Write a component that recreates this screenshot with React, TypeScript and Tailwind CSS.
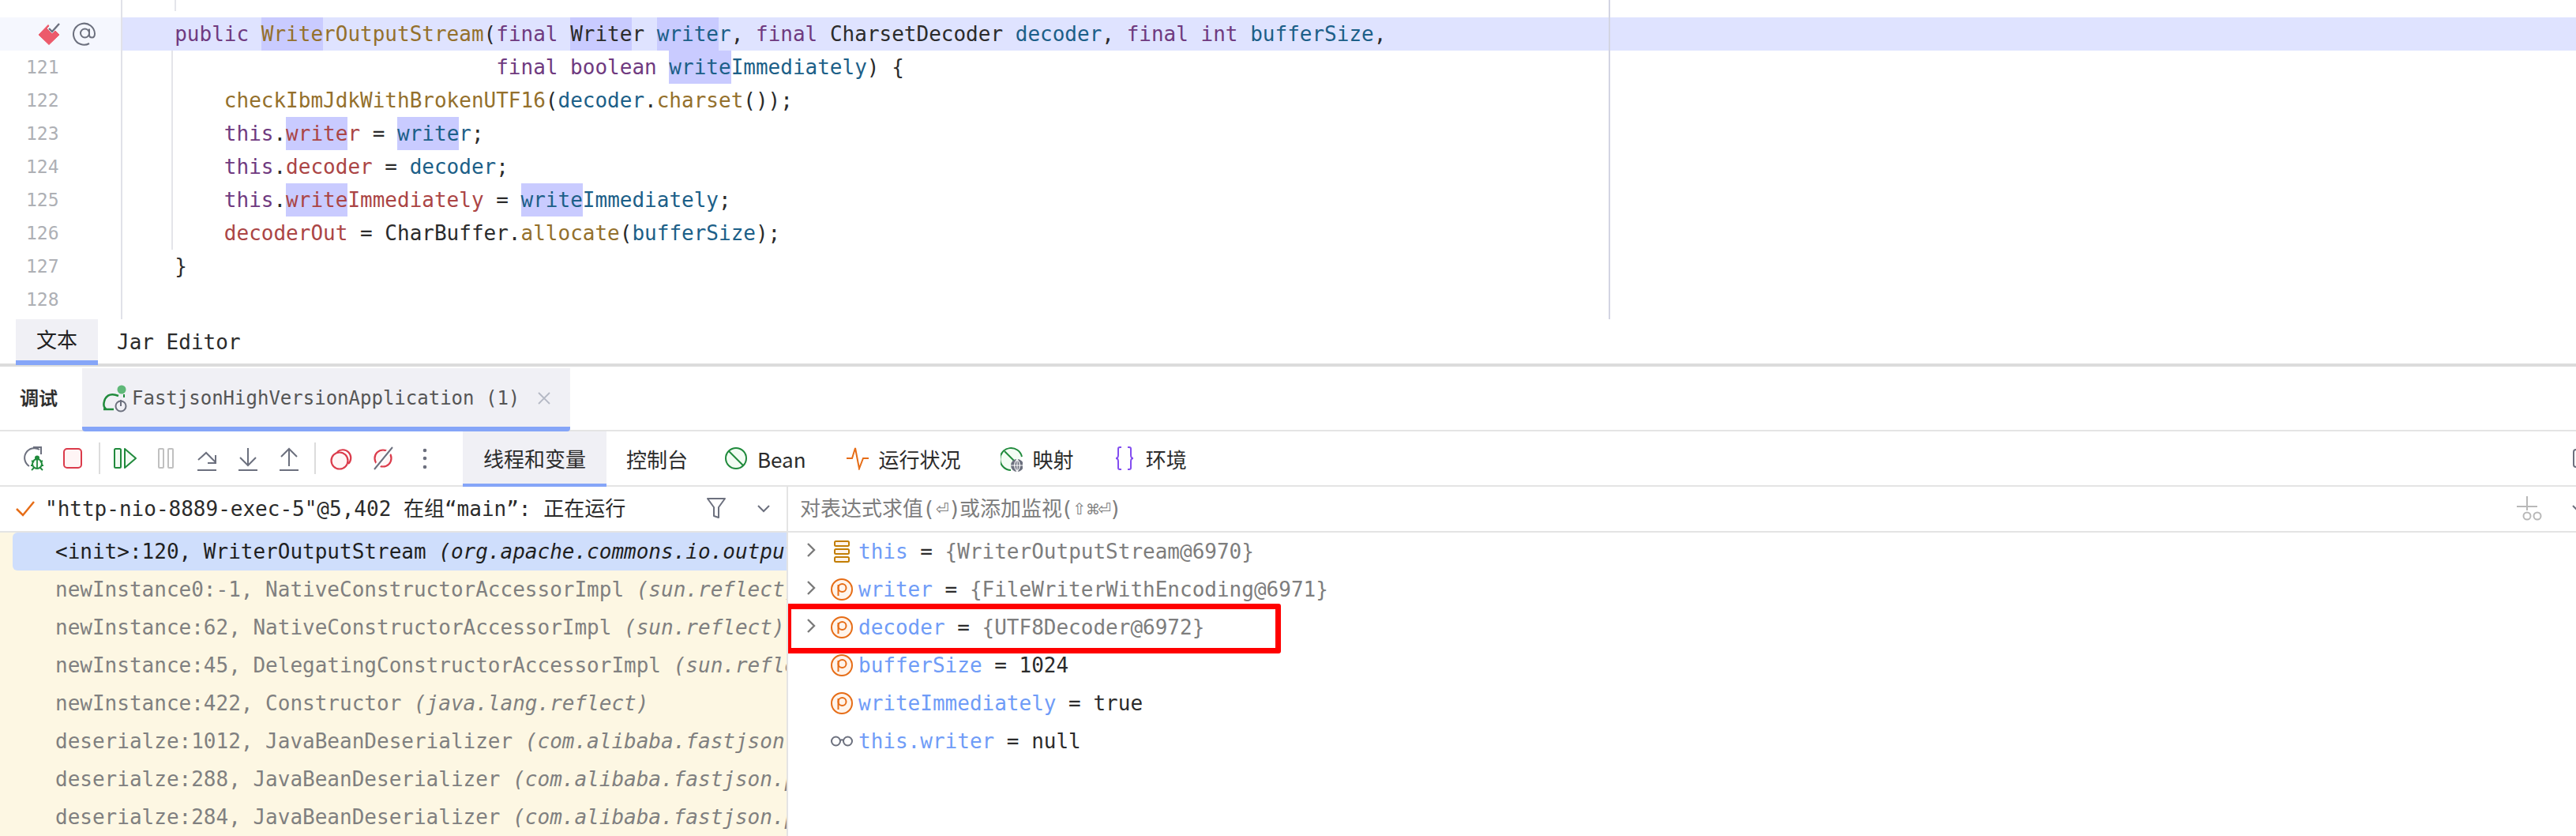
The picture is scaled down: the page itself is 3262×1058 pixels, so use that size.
import React from "react";

const MONO = "font-['DejaVu_Sans_Mono','Noto_Sans_CJK_SC',monospace]";
const KW = "text-[#6f3a80]";
const MT = "text-[#94702c]";
const PR = "text-[#1c5f88]";
const FD = "text-[#ab4545]";
const TX = "text-[#2b2b2b]";
const HL = "inline-block bg-[#c9cbff]";

const Hi = ({ children, c }: { children: string; c: string }) => <span className={`${HL} ${c}`}>{children}</span>;
const S = ({ children, c }: { children: string; c: string }) => <span className={c}>{children}</span>;

const codeLines: React.ReactNode[] = [
  <>
    {"    "}<S c={KW}>public </S><Hi c={MT}>Write</Hi><S c={MT}>rOutputStream</S><S c={TX}>(</S><S c={KW}>final </S>
    <Hi c={TX}>Write</Hi><S c={TX}>r </S><Hi c={PR}>write</Hi><S c={PR}>r</S><S c={TX}>, </S><S c={KW}>final </S><S c={TX}>CharsetDecoder </S>
    <S c={PR}>decoder</S><S c={TX}>, </S><S c={KW}>final int </S><S c={PR}>bufferSize</S><S c={TX}>,</S>
  </>,
  <>
    {"                              "}<S c={KW}>final boolean </S><Hi c={PR}>write</Hi><S c={PR}>Immediately</S><S c={TX}>{") {"}</S>
  </>,
  <>
    {"        "}<S c={MT}>checkIbmJdkWithBrokenUTF16</S><S c={TX}>(</S><S c={PR}>decoder</S><S c={TX}>.</S><S c={MT}>charset</S><S c={TX}>());</S>
  </>,
  <>
    {"        "}<S c={KW}>this</S><S c={TX}>.</S><Hi c={FD}>write</Hi><S c={FD}>r</S><S c={TX}>{" = "}</S><Hi c={PR}>write</Hi><S c={PR}>r</S><S c={TX}>;</S>
  </>,
  <>
    {"        "}<S c={KW}>this</S><S c={TX}>.</S><S c={FD}>decoder</S><S c={TX}>{" = "}</S><S c={PR}>decoder</S><S c={TX}>;</S>
  </>,
  <>
    {"        "}<S c={KW}>this</S><S c={TX}>.</S><Hi c={FD}>write</Hi><S c={FD}>Immediately</S><S c={TX}>{" = "}</S><Hi c={PR}>write</Hi><S c={PR}>Immediately</S><S c={TX}>;</S>
  </>,
  <>
    {"        "}<S c={FD}>decoderOut</S><S c={TX}>{" = CharBuffer."}</S><S c={MT}>allocate</S><S c={TX}>(</S><S c={PR}>bufferSize</S><S c={TX}>);</S>
  </>,
  <>
    {"    "}<S c={TX}>{"}"}</S>
  </>,
  <></>,
];

const lineNos = ["", "121", "122", "123", "124", "125", "126", "127", "128"];

const frames: [string, string][] = [
  ["newInstance0:-1, NativeConstructorAccessorImpl ", "(sun.reflect)"],
  ["newInstance:62, NativeConstructorAccessorImpl ", "(sun.reflect)"],
  ["newInstance:45, DelegatingConstructorAccessorImpl ", "(sun.reflect)"],
  ["newInstance:422, Constructor ", "(java.lang.reflect)"],
  ["deserialze:1012, JavaBeanDeserializer ", "(com.alibaba.fastjson.parser)"],
  ["deserialze:288, JavaBeanDeserializer ", "(com.alibaba.fastjson.parser)"],
  ["deserialze:284, JavaBeanDeserializer ", "(com.alibaba.fastjson.parser)"],
];

const GR = "#6c707e";
const GREEN = "#208a3c";
const RED = "#db3b4b";
const ORANGE = "#e66d17";

const Chevron = () => (
  <svg width="12" height="20" viewBox="0 0 12 20" fill="none" stroke="#7a7a7a" strokeWidth="2.4"><path d="M2 2l8 8-8 8" /></svg>
);
const PIcon = () => (
  <svg width="28" height="28" viewBox="0 0 28 28" fill="none" className="shrink-0">
    <circle cx="14" cy="14" r="13" fill="#fff4eb" stroke={ORANGE} strokeWidth="2" />
    <circle cx="14.5" cy="12" r="5" stroke={ORANGE} strokeWidth="2" />
    <path d="M9.500 8v14" stroke={ORANGE} strokeWidth="2" />
  </svg>
);
const StackIcon = () => (
  <svg width="20" height="28" viewBox="0 0 20 28" fill="none" stroke="#c27d04" strokeWidth="2" className="shrink-0">
    <rect x="1" y="1" width="18" height="6" rx="1.5" fill="#fff4eb" />
    <rect x="1" y="11" width="18" height="6" rx="1.5" fill="#fff4eb" />
    <rect x="1" y="21" width="18" height="6" rx="1.5" fill="#fff4eb" />
  </svg>
);
const Glasses = ({ c = GR, w = 30 }: { c?: string; w?: number }) => (
  <svg width={w} height="14" viewBox="0 0 30 14" fill="none" stroke={c} strokeWidth="2" className="shrink-0">
    <circle cx="7.5" cy="7" r="5.5" /><circle cx="22.5" cy="7" r="5.5" /><path d="M13 6q2-1.500 4 0" />
  </svg>
);

const Tool = ({ w, h = 34, vb, children, className = "" }: { w: number; h?: number; vb?: string; children: React.ReactNode; className?: string }) => (
  <svg width={w} height={h} viewBox={vb ?? `0 0 ${w} ${h}`} fill="none" className={`shrink-0 ${className}`}>{children}</svg>
);

const Tab = ({ label, icon, active, className = "" }: { label: string; icon?: React.ReactNode; active?: boolean; className?: string }) => (
  <div className={`flex h-[70px] items-center gap-[13px] pb-[2px] ${active ? "bg-[#f0f0f5] border-b-4 border-[#85a5f8] pt-[2px]" : ""} ${className}`}>
    {icon}
    <span className="text-[26px] text-[#2b2b2b]">{label}</span>
  </div>
);

const Var = ({ chevron, icon, name, val, dark }: { chevron?: boolean; icon: React.ReactNode; name: string; val: string; dark?: boolean }) => (
  <div className="flex h-[48px] items-center whitespace-pre">
    <div className="flex w-[54px] shrink-0 pl-[23px] pb-[4px]">{chevron && <Chevron />}</div>
    <div className="flex w-[28px] shrink-0 justify-center">{icon}</div>
    <div className="pl-[7px]">
      <span className="text-[#6f9cf7]">{name}</span>
      <span className="text-[#2b2b2b]"> = </span>
      <span className={dark ? "text-[#2b2b2b]" : "text-[#7d7d7d]"}>{val}</span>
    </div>
  </div>
);

const Sym = ({ children, className }: { children: string; className: string }) => (
  <span className={`inline-block text-center font-['DejaVu_Sans',sans-serif] ${className}`}>{children}</span>
);

export default function App() {
  return (
    <div className={`flex h-[1058px] w-[3262px] flex-col overflow-hidden bg-white text-[26px] ${MONO}`}>
      {/* editor */}
      <div className="flex h-[404px] shrink-0">
        <div className="w-[155px] shrink-0 border-r-2 border-[#e1e2e9] pt-[22px]">
          {lineNos.map((n, i) => (
            <div key={i} className={`relative flex h-[42px] items-center justify-start pl-[33px] text-[23px] text-[#aeb0b5] ${i === 0 ? "bg-[#f5f7fe]" : ""}`}>
              {i === 0 ? (
                <div className="flex items-center gap-[16px] pl-[15px]">
                  <svg width="28" height="28" viewBox="0 0 28 28" fill="none">
                    <path d="M13 2.500 L1 15 L14 27.500 L27 15 L22 10 L18 14 L11 7 L14 4Z" fill="#ec5a6b" stroke="#ec5a6b" strokeLinejoin="round" />
                    <path d="M14 7l4 4 9-10" stroke={GR} strokeWidth="2.4" />
                  </svg>
                  <svg width="30" height="30" viewBox="0 0 30 30" fill="none" stroke={GR} strokeWidth="2">
                    <circle cx="15.500" cy="14" r="5.500" />
                    <path d="M21 8.500V16q0 3.500 3.500 3.500T28 14.500A13.500 13.500 0 1 0 21 27" />
                  </svg>
                </div>
              ) : n}
            </div>
          ))}
        </div>
        <div className="relative flex-1 pt-[22px]">
          <div className="absolute left-[66px] top-0 h-[14px] w-[2px] bg-[#e4e5ea]" />
          <div className="absolute left-[62px] top-[64px] h-[252px] w-[2px] bg-[#e4e5ea]" />
          {codeLines.map((l, i) => (
            <div key={i} className={`h-[42px] whitespace-pre pl-[3.6px] leading-[42px] ${i === 0 ? "bg-[#dfe3ff]" : ""}`}>{l}</div>
          ))}
          <div className="absolute left-[1882px] top-0 h-full w-[2px] bg-[#d3d5e3]" />
        </div>
      </div>

      {/* editor tabs */}
      <div className="relative flex h-[60px] shrink-0 border-b-4 border-[#dcdcdc] pl-[20px]">
        <div className="relative z-10 flex h-[58px] w-[104px] items-center justify-center border-b-[6px] border-[#85a5f8] bg-[#f0f0f5] pt-[2px] text-[#222]">文本</div>
        <div className="flex h-[56px] items-center pl-[24px] pt-[2px] text-[#2b2b2b]">Jar Editor</div>
      </div>

      {/* debug header */}
      <div className="flex h-[82px] shrink-0 border-b-2 border-[#e4e4e4] pl-[25px] text-[24px]">
        <div className="flex w-[79px] items-center pt-[2px] text-[#2b2b2b] [font-weight:500] [-webkit-text-stroke:0.3px_#2b2b2b]">调试</div>
        <div className="relative mt-[2px] flex h-[80px] w-[618px] items-center rounded-b-[4px] border-b-[6px] border-[#85a5f8] bg-[#f0f0f5] pl-[26px] pt-[2px] text-[#555]">
          <svg width="32" height="36" viewBox="0 0 32 36" fill="none" className="mb-[-2px] shrink-0">
            <path d="M20 14 Q8 9 3 18 Q-1 28 5 31 L14 31 M1 31 L12 31" stroke={GREEN} strokeWidth="2.500" />
            <circle cx="24" cy="6" r="5.500" fill="#5fb878" />
            <path d="M27 12v4" stroke={GREEN} strokeWidth="2" />
            <circle cx="23" cy="27" r="6.500" fill="#f0f0f5" stroke={GR} strokeWidth="2" />
            <path d="M23 19v8" stroke={GR} strokeWidth="2" />
          </svg>
          <span className="pl-[5px]">FastjsonHighVersionApplication (1)</span>
          <svg width="16" height="16" viewBox="0 0 16 16" stroke="#b4b8c4" strokeWidth="1.800" className="ml-[23px]"><path d="M1 1l14 14M15 1L1 15" /></svg>
        </div>
      </div>

      {/* toolbar */}
      <div className="flex h-[70px] shrink-0 border-b-2 border-[#e4e4e4] font-['Noto_Sans_CJK_SC','DejaVu_Sans',sans-serif]">
        <div className="flex h-[68px] w-[586px] shrink-0 items-center pl-[28px]">
          <Tool w={30}>
            <path d="M22 6 A12 12 0 1 0 9 27" stroke={GR} strokeWidth="2" />
            <path d="M14 3 H24 V12" stroke={GR} strokeWidth="2" />
            <circle cx="19" cy="24" r="6" stroke={GREEN} strokeWidth="2" fill="#f2fcf3" />
            <circle cx="19" cy="16.500" r="3" fill={GREEN} />
            <path d="M12 20l3 2M26 20l-3 2M11 26h3M27 26h-3M12 32l3-3M26 32l-3-3M19 18v12" stroke={GREEN} strokeWidth="1.800" />
          </Tool>
          <Tool w={24} className="ml-[22px]"><rect x="1" y="5" width="22" height="24" rx="4" fill="#fff5f5" stroke={RED} strokeWidth="2" /></Tool>
          <div className="ml-[21px] h-[40px] w-[2px] bg-[#dcdcdc]" />
          <Tool w={30} className="ml-[17px]">
            <rect x="1" y="5" width="8" height="24" rx="1.500" fill="#f2fcf3" stroke={GREEN} strokeWidth="2" />
            <path d="M14 5 L28 17 L14 29 Z" fill="#f2fcf3" stroke={GREEN} strokeWidth="2" strokeLinejoin="round" />
          </Tool>
          <Tool w={20} className="ml-[26px]">
            <rect x="1" y="5" width="6" height="24" rx="1" stroke="#c0c0c0" strokeWidth="2" />
            <rect x="13" y="5" width="6" height="24" rx="1" stroke="#c0c0c0" strokeWidth="2" />
          </Tool>
          <Tool w={24} className="ml-[30px]">
            <path d="M0 32H24" stroke={GR} strokeWidth="2" />
            <path d="M1 19 L11 10 L23 22 M13 23 H23 V13" stroke={GR} strokeWidth="2" />
          </Tool>
          <Tool w={24} className="ml-[28px]">
            <path d="M0 32H24" stroke={GR} strokeWidth="2" />
            <path d="M12 4V26 M2 16 L12 26 L22 16" stroke={GR} strokeWidth="2" />
          </Tool>
          <Tool w={24} className="ml-[28px]">
            <path d="M0 32H24" stroke={GR} strokeWidth="2" />
            <path d="M12 27V5 M2 15 L12 5 L22 15" stroke={GR} strokeWidth="2" />
          </Tool>
          <div className="ml-[20px] h-[40px] w-[2px] bg-[#dcdcdc]" />
          <Tool w={28} className="ml-[18px]">
            <path d="M9 9 A9.500 9.500 0 1 1 23 24" stroke={RED} strokeWidth="2.200" />
            <circle cx="12" cy="20" r="10.500" fill="#fff5f5" stroke={RED} strokeWidth="2.200" />
          </Tool>
          <Tool w={26} className="ml-[26px]">
            <circle cx="13" cy="17" r="10.500" fill="#fff5f5" stroke={RED} strokeWidth="2.200" />
            <path d="M25 3 L2 31" stroke="#fff" strokeWidth="7" />
            <path d="M25 3 L2 31" stroke={GR} strokeWidth="2" />
          </Tool>
          <Tool w={6} className="ml-[37px]">
            <circle cx="3" cy="7" r="2.300" fill={GR} /><circle cx="3" cy="17" r="2.300" fill={GR} /><circle cx="3" cy="28" r="2.300" fill={GR} />
          </Tool>
        </div>
        <Tab label="线程和变量" active className="w-[182px] justify-center" />
        <Tab label="控制台" className="ml-[25px]" />
        <Tab label="Bean" className="ml-[47px]" icon={
          <svg width="28" height="28" viewBox="0 0 28 28" fill="none" stroke={GREEN} strokeWidth="2"><circle cx="14" cy="14" r="13" fill="#f2fcf3" /><path d="M5 5l18 18" /></svg>
        } />
        <Tab label="运行状况" className="ml-[51px]" icon={
          <svg width="28" height="30" viewBox="0 0 28 30" fill="none" stroke={ORANGE} strokeWidth="2"><path d="M0 15H7L11 2 L16 28 L21 15H28" /></svg>
        } />
        <Tab label="映射" className="ml-[50px]" icon={
          <svg width="28" height="34" viewBox="0 0 28 34" fill="none" className="mt-[2px]">
            <path d="M13 31 A14 14 0 1 1 27 14" fill="#f2fcf3" stroke={GREEN} strokeWidth="2" />
            <path d="M5 7l12 12" stroke={GREEN} strokeWidth="2" />
            <circle cx="21" cy="25" r="8" fill={GR} />
            <path d="M13 25h16M21 17v16M21 17q-7 8 0 16M21 17q7 8 0 16" stroke="#fff" strokeWidth="1.100" />
          </svg>
        } />
        <Tab label="环境" className="ml-[52px] gap-[15px]" icon={
          <svg width="24" height="30" viewBox="0 0 24 30" fill="none" stroke="#834df0" strokeWidth="2"><path d="M8 1H6Q4 1 4 3V11Q4 15 1 15Q4 15 4 19V27Q4 29 6 29H8M16 1H18Q20 1 20 3V11Q20 15 23 15Q20 15 20 19V27Q20 29 18 29H16" /></svg>
        } />
        <div className="ml-auto flex h-[68px] items-center">
          <div className="mr-[-20px] h-[24px] w-[24px] rounded-[4px] border-2 border-[#6c707e]" />
        </div>
      </div>

      {/* main */}
      <div className="flex min-h-0 flex-1">
        {/* left */}
        <div className="w-[998px] shrink-0 overflow-hidden border-r-2 border-[#e4e4e4]">
          <div className="flex h-[58px] items-center border-b-2 border-[#e4e4e4] pl-[20px] whitespace-pre">
            <svg width="24" height="20" viewBox="0 0 24 20" fill="none" stroke={ORANGE} strokeWidth="2.500" className="shrink-0"><path d="M1 10l8 8L23 1" /></svg>
            <span className="w-[851px] shrink-0 pl-[13px] text-[#2b2b2b]">"http-nio-8889-exec-5"@5,402 在组“main”: 正在运行</span>
            <svg width="24" height="26" viewBox="0 0 24 26" fill="none" stroke={GR} strokeWidth="2" className="mt-[-2px] shrink-0"><path d="M1 1H23L15 12V25L9 23V12Z" strokeLinejoin="round" /></svg>
            <svg width="16" height="10" viewBox="0 0 16 10" fill="none" stroke={GR} strokeWidth="2" className="ml-[40px] shrink-0"><path d="M1 1l7 7 7-7" /></svg>
          </div>
          <div className="h-[384px] bg-[#fdf7e3]">
            <div className="ml-[16px] flex h-[48px] items-center whitespace-pre rounded-l-[6px] bg-[#cfdefc] pl-[54px] text-[#1f1f1f]">
              &lt;init&gt;:120, WriterOutputStream <span className="italic">(org.apache.commons.io.output)</span>
            </div>
            {frames.map(([a, b], i) => (
              <div key={i} className="flex h-[48px] items-center whitespace-pre pl-[70px] text-[#808080]">
                {a}<span className="italic">{b}</span>
              </div>
            ))}
          </div>
        </div>
        {/* right */}
        <div className="relative min-w-0 flex-1 overflow-hidden">
          <div className="flex h-[58px] items-center border-b-2 border-[#e4e4e4] pl-[15px] whitespace-pre text-[#7d7d7d]">
            对表达式求值<Sym className="w-[15px]">(</Sym><Sym className="w-[18px] text-[20px]">⏎</Sym><Sym className="w-[13px]">)</Sym>或添加监视<Sym className="w-[13px]">(</Sym><Sym className="w-[17px] text-[20px]">⇧</Sym><Sym className="w-[15px] text-[18px]">⌘</Sym><Sym className="w-[16px] text-[20px]">⏎</Sym><Sym className="w-[12px]">)</Sym>
            <div className="ml-auto flex items-center">
              <svg width="38" height="36" viewBox="0 0 38 36" fill="none" stroke="#b8b8b8" strokeWidth="2" className="mr-[32px]">
                <path d="M0 15H26M13 2V20" />
                <circle cx="13" cy="27" r="4.500" /><circle cx="26" cy="27" r="4.500" />
              </svg>
              <svg width="10" height="14" viewBox="0 0 10 14" fill="none" stroke={GR} strokeWidth="2" className="mr-[-5px] mt-[4px]"><path d="M1 1l9 9" /></svg>
            </div>
          </div>
          <Var chevron icon={<StackIcon />} name="this" val="{WriterOutputStream@6970}" />
          <Var chevron icon={<PIcon />} name="writer" val="{FileWriterWithEncoding@6971}" />
          <Var chevron icon={<PIcon />} name="decoder" val="{UTF8Decoder@6972}" />
          <Var icon={<PIcon />} name="bufferSize" val="1024" dark />
          <Var icon={<PIcon />} name="writeImmediately" val="true" dark />
          <Var icon={<Glasses />} name="this.writer" val="null" dark />
          <div className="pointer-events-none absolute left-[-3px] top-[148px] h-[63px] w-[627px] rounded-[3px] border-[7px] border-[#ff0000]" />
        </div>
      </div>
    </div>
  );
}
